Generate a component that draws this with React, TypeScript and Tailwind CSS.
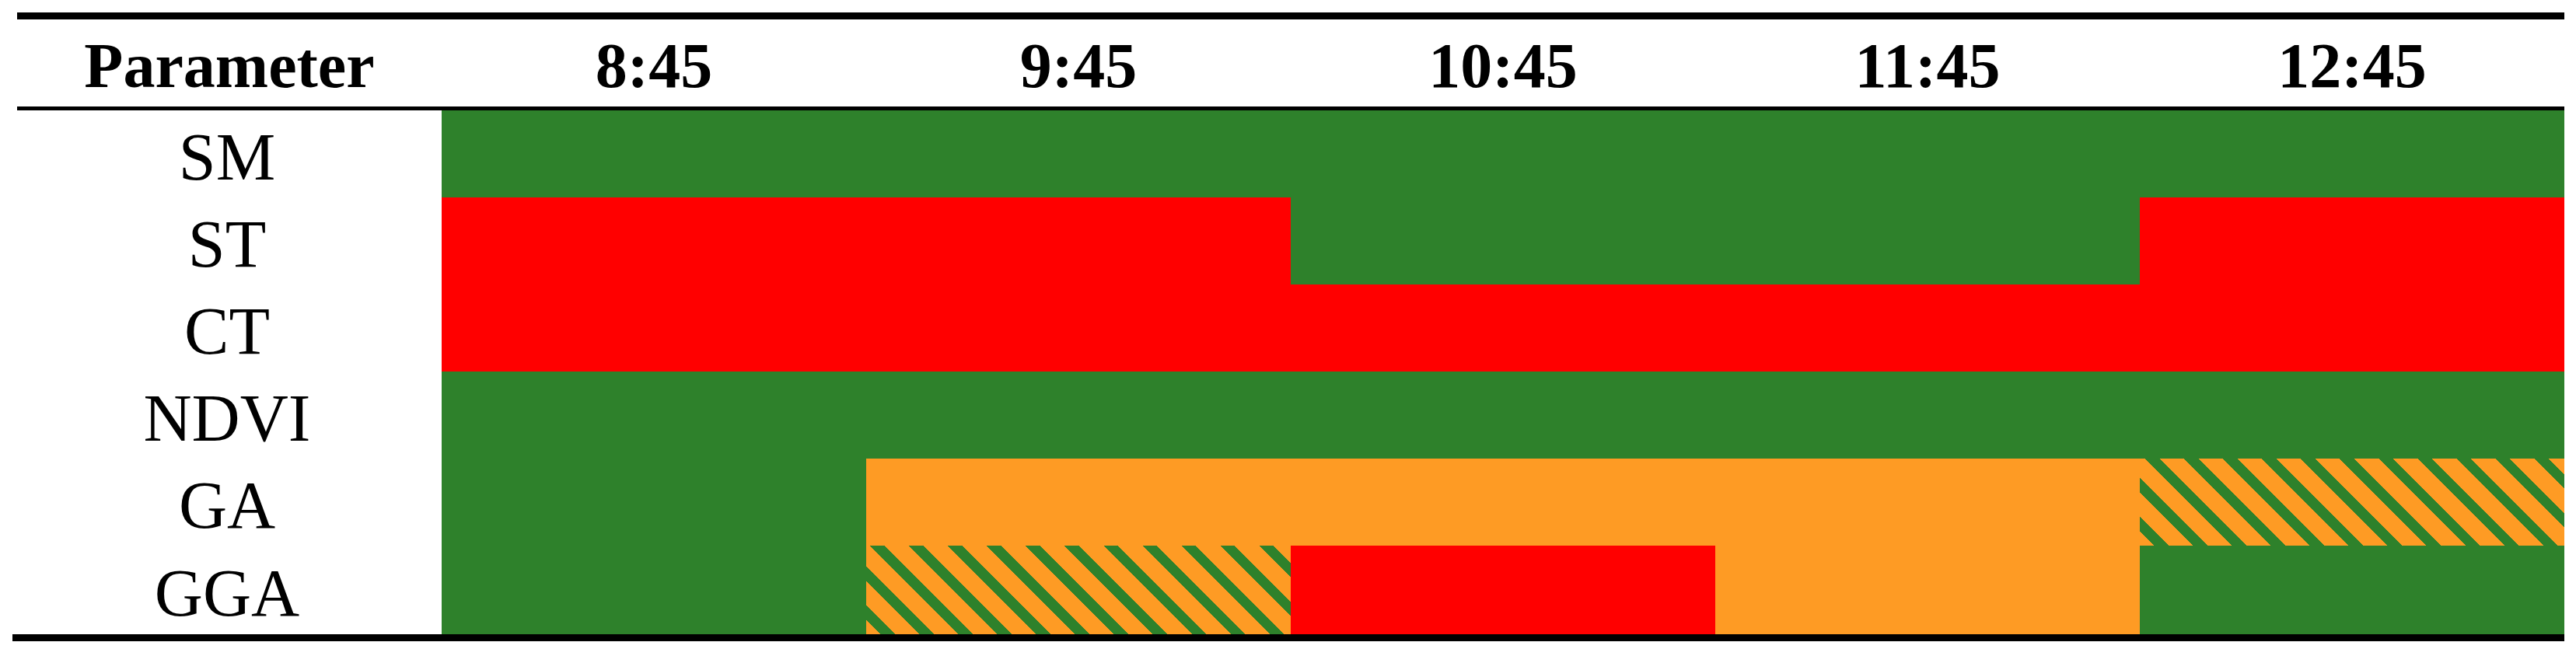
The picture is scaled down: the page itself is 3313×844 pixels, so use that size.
import React from 'react';

type Cell = 'g' | 'r' | 'o' | 'h';

const fills: Record<Cell, string> = {
  g: 'bg-[#2e812b]',
  r: 'bg-[#ff0000]',
  o: 'bg-[#fe9b24]',
  // orange with green diagonal hatching
  h: 'bg-[#fe9b24] bg-[image:repeating-linear-gradient(45deg,#fe9b24_0px,#fe9b24_13.4px,#2e812b_13.4px,#2e812b_26.2px,#fe9b24_26.2px,#fe9b24_35.36px)]',
};

const times = ['8:45', '9:45', '10:45', '11:45', '12:45'];

const rows: { name: string; cells: Cell[]; h: string }[] = [
  { name: 'SM', cells: ['g', 'g', 'g', 'g', 'g'], h: 'h-[112px]' },
  { name: 'ST', cells: ['r', 'r', 'g', 'g', 'r'], h: 'h-[112px]' },
  { name: 'CT', cells: ['r', 'r', 'r', 'r', 'r'], h: 'h-[112px]' },
  { name: 'NDVI', cells: ['g', 'g', 'g', 'g', 'g'], h: 'h-[112px]' },
  { name: 'GA', cells: ['g', 'o', 'o', 'o', 'h'], h: 'h-[112px]' },
  { name: 'GGA', cells: ['g', 'h', 'r', 'o', 'g'], h: 'h-[114px]' },
];

export default function App() {
  return (
    <div className="w-[3313px] h-[844px] bg-white pt-[16px] pl-[16px] font-['Liberation_Serif',serif] text-black">
      <div className="w-[3282px]">
        {/* header */}
        <div className="ml-[6px] border-t-[9px] border-b-[5px] border-black grid grid-cols-[546px_repeat(5,546px)] h-[126px]">
          <div className="flex items-center justify-center pt-[8px] text-[82px] font-bold leading-none">Parameter</div>
          {times.map((t) => (
            <div key={t} className="flex items-center justify-center pt-[8px] text-[82px] font-bold leading-none">
              {t}
            </div>
          ))}
        </div>

        {/* body */}
        <div className="border-b-[9px] border-black">
          {rows.map((row) => (
            <div key={row.name} className={`grid grid-cols-[552px_repeat(5,546px)] ${row.h}`}>
              <div className="flex items-center justify-center pt-[8px] text-[86px] leading-none">{row.name}</div>
              {row.cells.map((c, i) => (
                <div key={i} className={fills[c]} />
              ))}
            </div>
          ))}
        </div>
      </div>
    </div>
  );
}
